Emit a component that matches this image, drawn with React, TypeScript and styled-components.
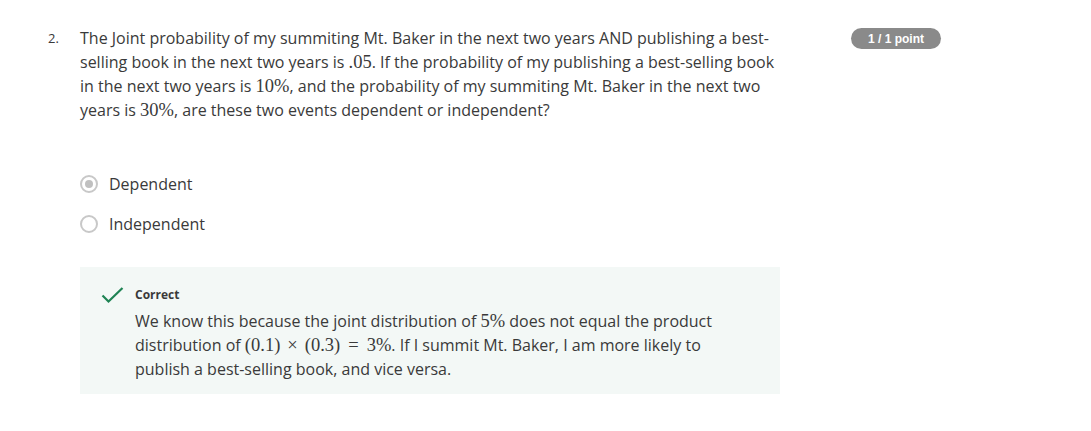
import React from "react";
import styled, { createGlobalStyle } from "styled-components";

const Global = createGlobalStyle`
  html, body { margin: 0; padding: 0; background: #ffffff; }
  body { font-family: "Open Sans", "DejaVu Sans", sans-serif; color: #3a3a3a; }
`;

const Page = styled.div`
  display: flex;
  align-items: flex-start;
  padding: 26px 0 0 48px;
`;

const Number = styled.div`
  width: 32px;
  font-size: 13px;
  line-height: 24px;
`;

const Content = styled.div`
  width: 700px;
  display: flex;
  flex-direction: column;
`;

const Question = styled.p`
  margin: 0;
  font-size: 16px;
  line-height: 24px;
`;

const M = styled.span`
  font-family: "Liberation Serif", "DejaVu Serif", serif;
  font-size: 18.5px;
  line-height: 1;
  white-space: nowrap;
`;

const Op = styled.span<{ $space: number }>`
  margin: 0 ${(p) => p.$space}px;
`;

const Options = styled.div`
  display: flex;
  flex-direction: column;
  margin-top: 42px;
`;

const Option = styled.label`
  display: flex;
  align-items: center;
  height: 40px;
  gap: 11px;
  font-size: 16px;
`;

const Radio = styled.span<{ $checked?: boolean }>`
  box-sizing: border-box;
  width: 18px;
  height: 18px;
  border-radius: 50%;
  border: 2px solid #c8c8c8;
  display: flex;
  align-items: center;
  justify-content: center;
  &::after {
    content: "";
    width: 8px;
    height: 8px;
    border-radius: 50%;
    background: #c0c0c0;
    display: ${(p) => (p.$checked ? "block" : "none")};
  }
`;

const Feedback = styled.div`
  margin-top: 23px;
  background: #f3f8f6;
  display: flex;
  gap: 11px;
  padding: 19px 46px 13px 21px;
`;

const FeedbackBody = styled.div`
  display: flex;
  flex-direction: column;
  gap: 5px;
`;

const CorrectLabel = styled.div`
  font-size: 12px;
  font-weight: 700;
  line-height: 18px;
`;

const Explanation = styled.p`
  margin: 0;
  font-size: 16px;
  line-height: 24px;
`;

const Badge = styled.div`
  margin-left: 71px;
  margin-top: 2px;
  width: 90px;
  height: 21px;
  border-radius: 11px;
  background: #8a8a8a;
  color: #ffffff;
  font-family: "Liberation Sans", Arial, sans-serif;
  font-weight: 700;
  font-size: 12px;
  display: flex;
  align-items: center;
  justify-content: center;
`;

const Check = () => (
  <svg width="23" height="17" viewBox="0 0 23 17" style={{ marginTop: 1, flexShrink: 0 }}>
    <path d="M1.5 8.5 L7.5 14.5 L21.5 1" fill="none" stroke="#1f8354" strokeWidth="2.2" />
  </svg>
);

export default function App() {
  return (
    <>
      <Global />
      <Page>
        <Number>2.</Number>
        <Content>
          <Question>
            The Joint probability of my summiting Mt. Baker in the next two years AND publishing a
            best-selling book in the next two years is <M>.05</M>. If the probability of my
            publishing a best-selling book in the next two years is <M>10%</M>, and the probability
            of my summiting Mt. Baker in the next two years is <M>30%</M>, are these two events
            dependent or independent?
          </Question>
          <Options>
            <Option>
              <Radio $checked />
              Dependent
            </Option>
            <Option>
              <Radio />
              Independent
            </Option>
          </Options>
          <Feedback>
            <Check />
            <FeedbackBody>
              <CorrectLabel>Correct</CorrectLabel>
              <Explanation>
                We know this because the joint distribution of <M>5%</M> does not equal the product
                distribution of{" "}
                <M>
                  (0.1)<Op $space={7}>×</Op>(0.3)<Op $space={8}>=</Op>3%
                </M>
                . If I summit Mt. Baker, I am more likely to publish a best-selling book, and vice
                versa.
              </Explanation>
            </FeedbackBody>
          </Feedback>
        </Content>
        <Badge>1 / 1 point</Badge>
      </Page>
    </>
  );
}
